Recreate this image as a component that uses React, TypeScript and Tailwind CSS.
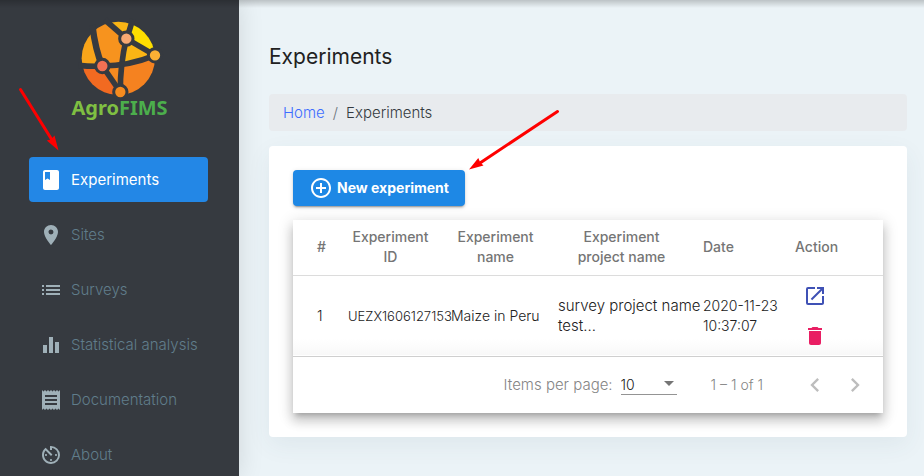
import React from "react";
import type { IconType } from "react-icons";
import {
  MdClass,
  MdPlace,
  MdList,
  MdEqualizer,
  MdReceipt,
  MdAvTimer,
  MdControlPoint,
  MdOpenInNew,
  MdDelete,
  MdChevronLeft,
  MdChevronRight,
  MdArrowDropDown,
} from "react-icons/md";

const navItems: { label: string; icon: IconType; active?: boolean }[] = [
  { label: "Experiments", icon: MdClass, active: true },
  { label: "Sites", icon: MdPlace },
  { label: "Surveys", icon: MdList },
  { label: "Statistical analysis", icon: MdEqualizer },
  { label: "Documentation", icon: MdReceipt },
  { label: "About", icon: MdAvTimer },
];

const experiments = [
  {
    id: "UEZX1606127153",
    name: "Maize in Peru",
    project: "survey project name test...",
    date: "2020-11-23 10:37:07",
  },
];

function Globe() {
  return (
    <svg viewBox="0 0 288 255" className="h-[85px] w-24" aria-hidden="true">
      <defs>
        <clipPath id="globe">
          <circle cx="139" cy="130" r="110" />
        </clipPath>
      </defs>
      <g clipPath="url(#globe)">
        <path d="M91 153 60 40 90 20 163 71 150 148Z" fill="#f7931e" />
        <path d="M0 0H60L91 153 0 146Z" fill="#f9a51a" />
        <path d="M90 0H190L163 71 90 20Z" fill="#fab515" />
        <path d="M190 0H288V121H249L163 71Z" fill="#ffde00" />
        <path d="M163 71 249 121 150 150Z" fill="#fab515" />
        <path d="M249 121 288 121V255H145L150 150Z" fill="#f58220" />
        <path d="M91 153 150 148 145 231Z" fill="#f58a20" />
        <path d="M0 146 91 153 145 231V255H0Z" fill="#f26a21" />
      </g>
      <g fill="none" stroke="#363a40" strokeWidth="17">
        <path d="M163 71 249 121" />
        <path d="M163 71Q144 150 145 231" />
        <path d="M249 121Q170 153 91 153" />
        <path d="M91 153 145 231" />
        <path d="M163 71 98 14" />
        <path d="M163 71Q172 50 182 12" />
        <path d="M91 153Q70 105 61 30" strokeWidth="19" />
        <path d="M91 153Q60 155 20 151" />
      </g>
      <g stroke="#363a40" strokeWidth="9">
        <circle cx="163" cy="71" r="20" fill="#f7a872" />
        <circle cx="249" cy="121" r="20" fill="#fbb034" />
        <circle cx="91" cy="153" r="20" fill="#f37053" />
        <circle cx="145" cy="231" r="20" fill="#f68b1f" />
      </g>
    </svg>
  );
}

function Sidebar() {
  return (
    <aside className="w-[239px] shrink-0 bg-[#363a40] shadow-[0_0_24px_rgba(0,0,0,0.12)]">
      <div className="flex h-[157px] flex-col items-center pt-[15px]">
        <Globe />
        <div className="font-['Noto_Sans',sans-serif] text-xl/4 font-bold text-[#7fbf42]">
          Agro<span className="text-[#4cae4c]">FIMS</span>
        </div>
      </div>
      <nav className="flex flex-col gap-[10px] pr-[31px] pl-[29px]">
        {navItems.map(({ label, icon: Icon, active }) => (
          <a
            key={label}
            href="#"
            aria-current={active ? "page" : undefined}
            className={
              active
                ? "flex h-[45px] items-center gap-2 rounded bg-[#2387e6] px-[10px] text-[15px] text-white"
                : "flex h-[45px] items-center gap-2 rounded px-[10px] text-[15px] font-light text-[#607d8b]"
            }
          >
            <Icon className={active ? "size-6" : "size-6 text-[#9fb0b8]"} />
            <span className="pt-[2px]">{label}</span>
          </a>
        ))}
      </nav>
    </aside>
  );
}

function ExperimentTable() {
  return (
    <div className="mt-[14px] bg-white shadow-[0_5px_5px_-3px_rgba(0,0,0,0.2),0_8px_10px_1px_rgba(0,0,0,0.14),0_3px_14px_2px_rgba(0,0,0,0.12)]">
      <table className="w-full table-fixed text-sm/5">
        <colgroup>
          <col className="w-[55px]" />
          <col className="w-[103px]" />
          <col className="w-[107px]" />
          <col className="w-[145px]" />
          <col className="w-[92px]" />
          <col />
        </colgroup>
        <thead>
          <tr className="h-[55px] border-b border-[#dcdcdc] text-[#757575]">
            <th className="pl-6 text-left font-medium">#</th>
            <th className="pr-[18px] font-medium">Experiment ID</th>
            <th className="pr-[18px] font-medium">Experiment name</th>
            <th className="pr-[30px] pl-3 font-medium">Experiment project name</th>
            <th className="text-left font-medium">Date</th>
            <th className="text-left font-medium">Action</th>
          </tr>
        </thead>
        <tbody>
          {experiments.map((e, i) => (
            <tr key={e.id} className="h-20 border-b border-[#cfcfcf] bg-linear-to-b from-white from-80% to-[#f8f8f8] font-light text-[#212121]">
              <td className="pl-6">{i + 1}</td>
              <td className="text-[13px]">{e.id}</td>
              <td>{e.name}</td>
              <td className="text-[15px]">{e.project}</td>
              <td className="pr-3">{e.date}</td>
              <td>
                <div className="flex w-10 flex-col items-center">
                  <button type="button" aria-label="Open experiment" className="flex h-10 items-center text-[#3f51b5]">
                    <MdOpenInNew className="size-6" />
                  </button>
                  <button type="button" aria-label="Delete experiment" className="flex h-10 items-center text-[#e91e63]">
                    <MdDelete className="size-6" />
                  </button>
                </div>
              </td>
            </tr>
          ))}
        </tbody>
      </table>
      <div className="flex h-14 items-center justify-end pr-2 text-sm font-light text-[#858585]">
        <label htmlFor="page-size" className="text-[15px]">Items per page:</label>
        <div className="relative ml-2 w-14">
          <select
            id="page-size"
            defaultValue="10"
            className="h-[19px] w-full appearance-none border-b border-[#949494] bg-transparent text-sm/4 text-[#212121]"
          >
            <option>10</option>
            <option>25</option>
            <option>50</option>
          </select>
          <MdArrowDropDown className="pointer-events-none absolute -top-1 -right-1 size-6 text-[#757575]" />
        </div>
        <span className="mr-8 ml-[34px]">1 – 1 of 1</span>
        <button type="button" aria-label="Previous page" className="flex size-10 items-center justify-center text-[#bdbdbd]">
          <MdChevronLeft className="size-7" />
        </button>
        <button type="button" aria-label="Next page" className="flex size-10 items-center justify-center text-[#bdbdbd]">
          <MdChevronRight className="size-7" />
        </button>
      </div>
    </div>
  );
}

function Arrows() {
  return (
    <svg className="pointer-events-none absolute top-0 left-0 h-[180px] w-[570px]" viewBox="0 0 570 180" aria-hidden="true">
      <g stroke="#fe0000" strokeWidth="3" strokeLinecap="round">
        <path d="M20.500 89.500 52 140" />
        <path d="M557.500 111.500 480 163" />
      </g>
      <g fill="#fe0000">
        <path d="M58.500 150.500 46.800 140.500 51 139.500 54.500 135.500Z" />
        <path d="M469 169.500 478.300 158 480 162 483.500 165.500Z" />
      </g>
    </svg>
  );
}

export default function App() {
  return (
    <div className="relative flex min-h-screen bg-[#ebf3f7] font-[Inter,sans-serif]">
      <Sidebar />
      <main className="min-w-0 flex-1 pt-[42px] pr-[17px] pb-[39px] pl-[30px]">
        <h1 className="text-[21px]/[30px] text-[#212121]">Experiments</h1>
        <nav aria-label="Breadcrumb" className="mt-[22px] flex h-[37px] items-center gap-2 rounded bg-[#e8ebee] px-[14px] pt-[2px] text-[15px] font-light">
          <a href="#" className="text-[#3d6dff]">Home</a>
          <span className="text-[#6c757d]">/</span>
          <span className="text-[#343a40]">Experiments</span>
        </nav>
        <section className="mt-[15px] rounded bg-white p-6 shadow-[0_8px_24px_rgba(60,80,100,0.07)]">
          <button
            type="button"
            className="flex h-9 items-center gap-1 rounded bg-[#1e88e5] px-4 text-sm font-bold text-white shadow-[0_3px_1px_-2px_rgba(0,0,0,0.2),0_2px_2px_rgba(0,0,0,0.14),0_1px_5px_rgba(0,0,0,0.12)]"
          >
            <MdControlPoint className="size-6" />
            New experiment
          </button>
          <ExperimentTable />
        </section>
      </main>
      <div className="pointer-events-none absolute inset-x-0 top-0 h-2 bg-linear-to-b from-black/20 to-transparent" />
      <Arrows />
    </div>
  );
}
